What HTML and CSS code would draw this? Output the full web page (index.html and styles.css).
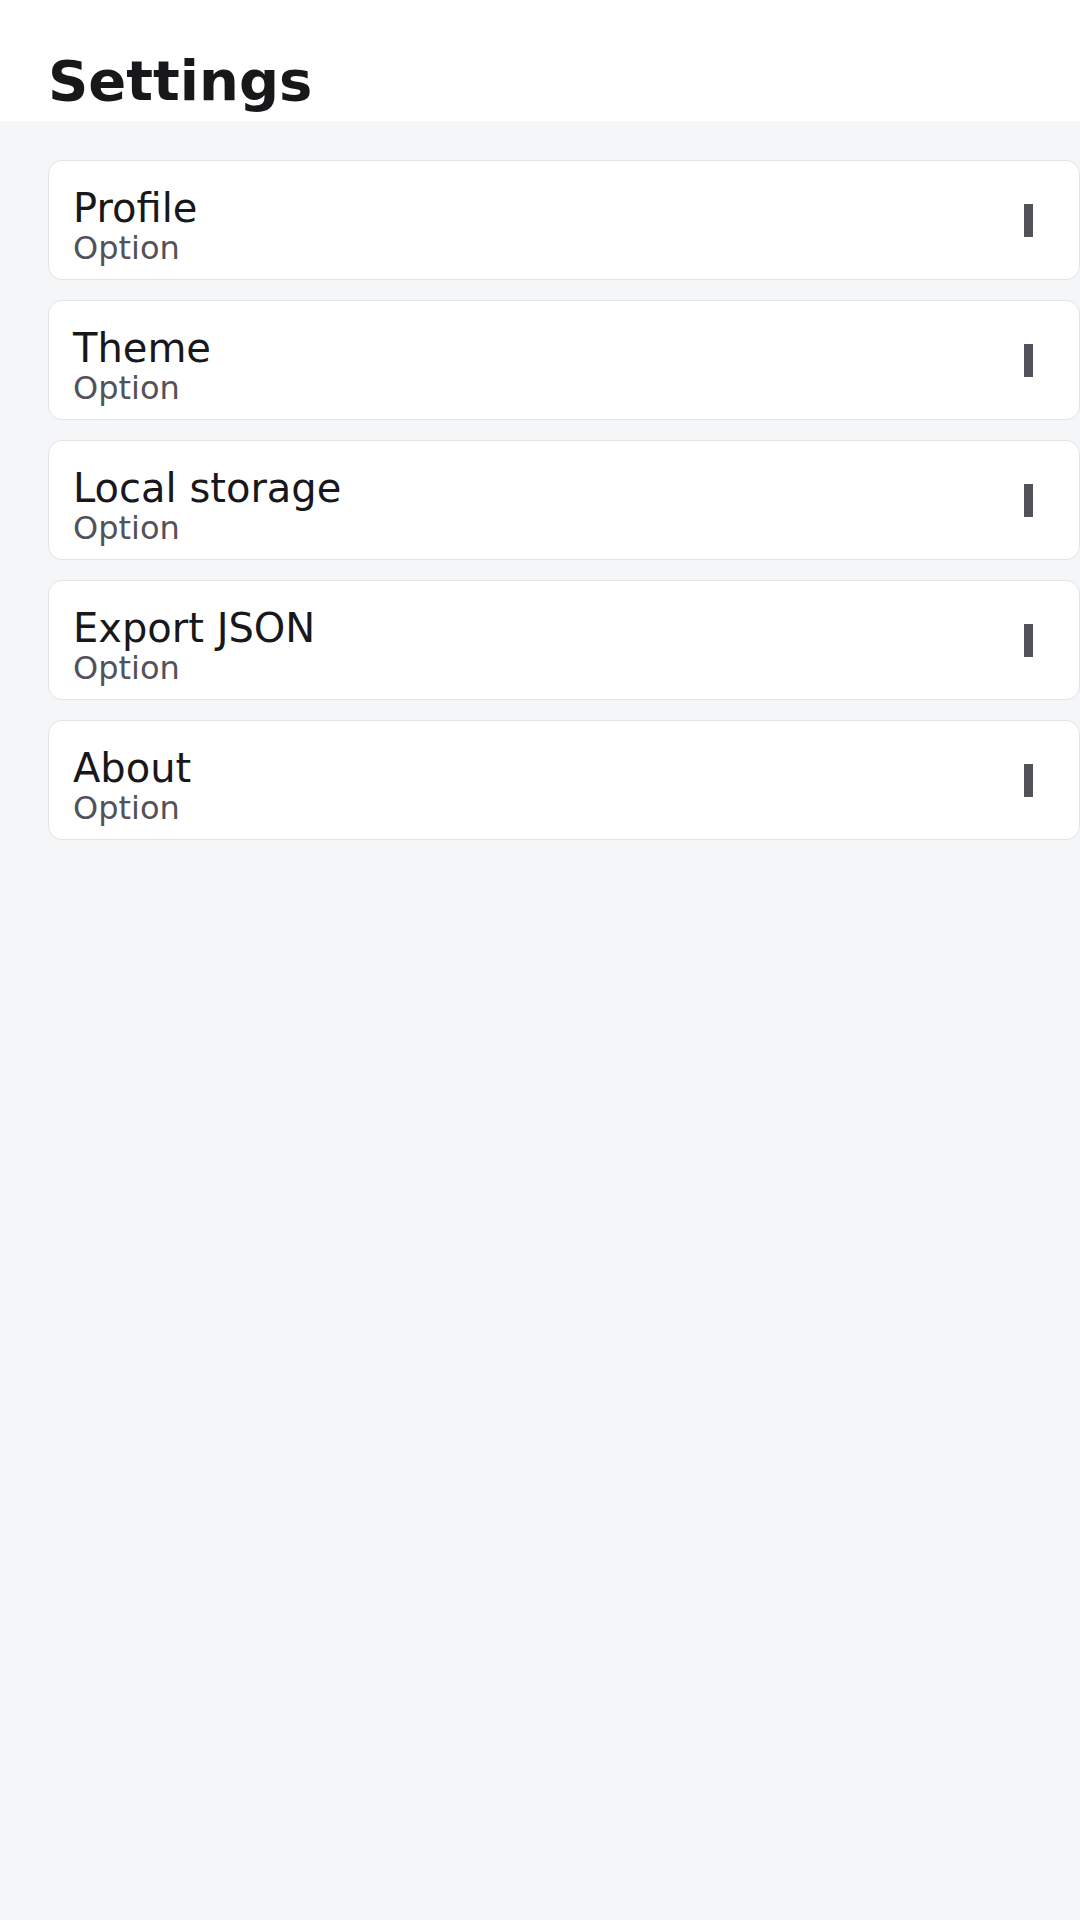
FILE: index.html
```html
<!DOCTYPE html>
<html lang="en">
<head>
<meta charset="utf-8">
<title>Settings</title>
<link rel="stylesheet" href="styles.css">
</head>
<body>
<header class="top">
  <h1 class="title">Settings</h1>
</header>
<main class="list">
  <div class="card">
    <div class="text"><div class="label">Profile</div><div class="sub">Option</div></div>
    <span class="bar"></span>
  </div>
  <div class="card">
    <div class="text"><div class="label">Theme</div><div class="sub">Option</div></div>
    <span class="bar"></span>
  </div>
  <div class="card">
    <div class="text"><div class="label">Local storage</div><div class="sub">Option</div></div>
    <span class="bar"></span>
  </div>
  <div class="card">
    <div class="text"><div class="label">Export JSON</div><div class="sub">Option</div></div>
    <span class="bar"></span>
  </div>
  <div class="card">
    <div class="text"><div class="label">About</div><div class="sub">Option</div></div>
    <span class="bar"></span>
  </div>
</main>
</body>
</html>
```
FILE: styles.css
```css
html, body {
  margin: 0;
  padding: 0;
}
body {
  background: #f5f6f8;
  font-family: "DejaVu Sans", sans-serif;
  color: #18181b;
  min-height: 1920px;
}
.top {
  background: #ffffff;
  height: 121px;
  box-sizing: border-box;
  padding: 48px 0 0 48px;
}
.title {
  margin: 0;
  font-size: 56px;
  font-weight: bold;
  line-height: normal;
  color: #18181b;
}
.list {
  display: flex;
  flex-direction: column;
  gap: 20px;
  padding: 39px 0 0 48px;
}
.card {
  box-sizing: border-box;
  height: 120px;
  background: #ffffff;
  border: 1px solid #e4e4e7;
  border-radius: 14px;
  padding: 24px;
  display: flex;
  align-items: center;
  justify-content: space-between;
}
.text {
  align-self: flex-start;
}
.label {
  font-size: 40px;
  line-height: normal;
  color: #18181b;
}
.sub {
  font-size: 32px;
  line-height: 36px;
  margin-top: -1px;
  color: #52525b;
}
.bar {
  width: 9px;
  height: 33px;
  background: #52525b;
  margin-right: 22px;
}
```
